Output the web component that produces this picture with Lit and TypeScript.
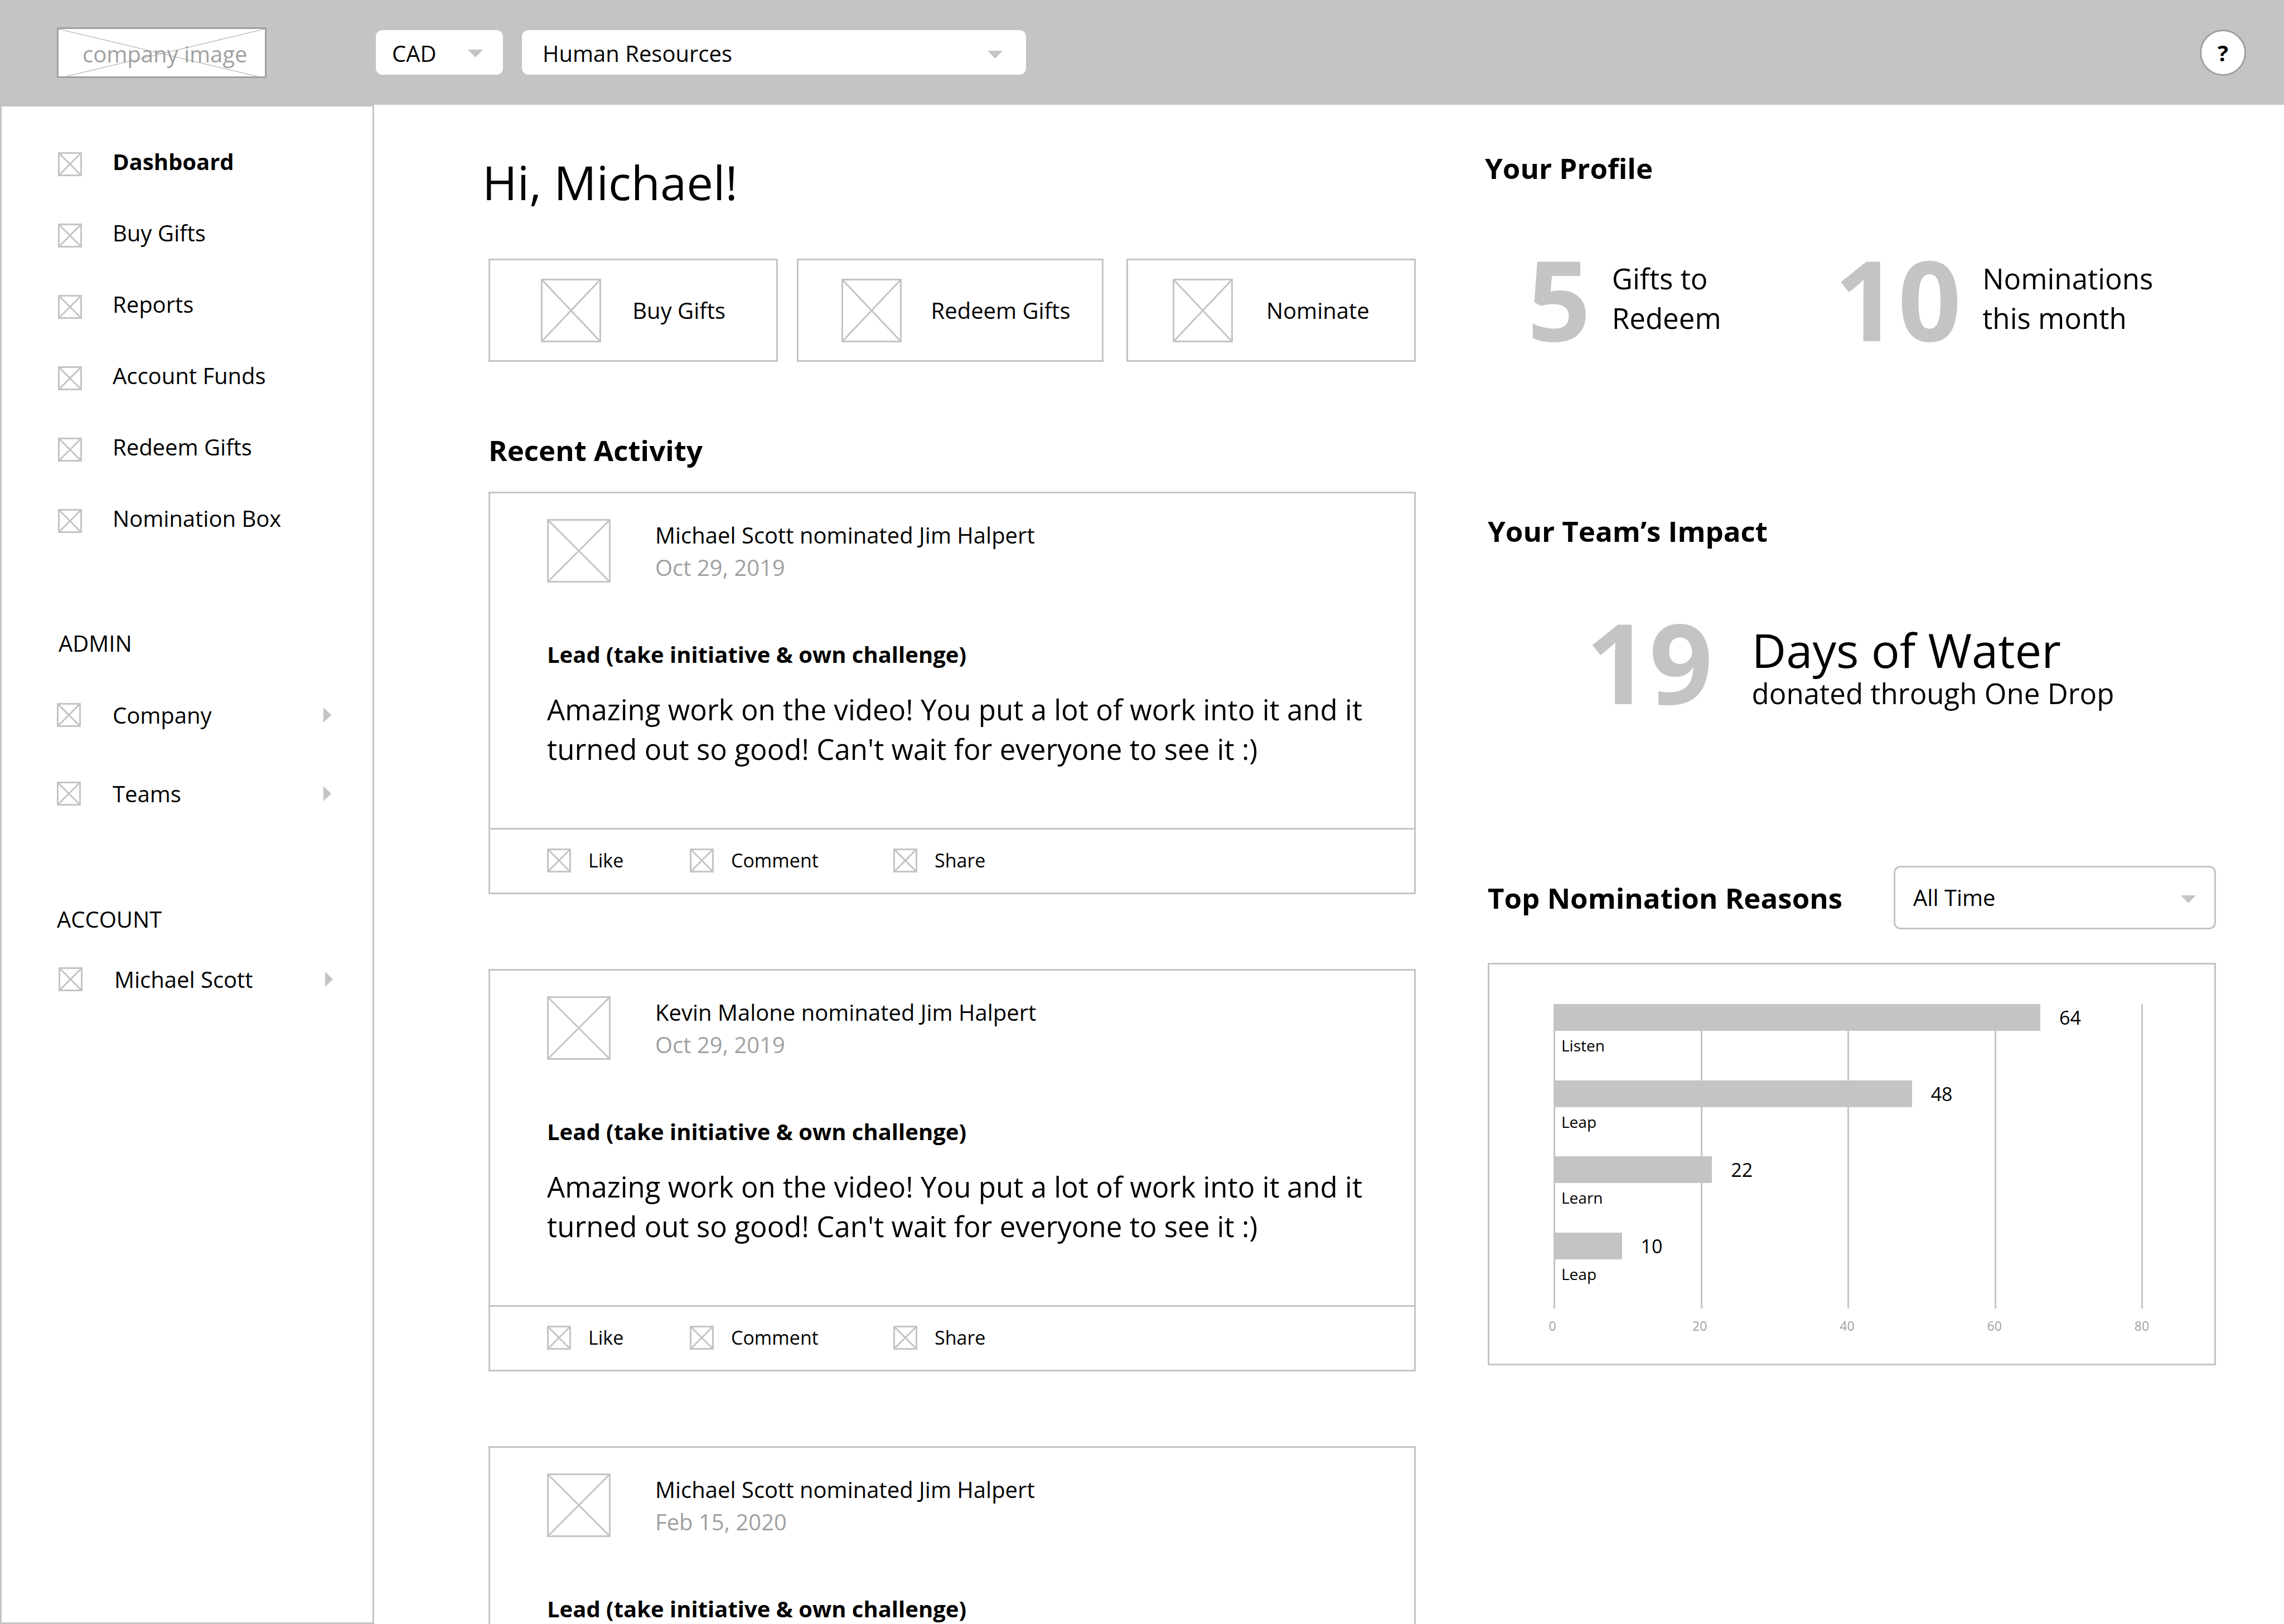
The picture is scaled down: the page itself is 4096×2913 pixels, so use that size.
import { LitElement, html, css, svg } from "lit";
import { customElement, property } from "lit/decorators.js";
import { classMap } from "lit/directives/class-map.js";
import { styleMap } from "lit/directives/style-map.js";

/** Box crossed by its two diagonals, standing in for a picture. */
const placeholder = (w: number, h: number) => html`
  <svg class="ph" width=${w} height=${h} viewBox="0 0 ${w} ${h}" aria-hidden="true">
    ${svg`<path d="M1.5 1.5H${w - 1.5}V${h - 1.5}H1.5ZM1.5 1.5L${w - 1.5} ${h - 1.5}M${w - 1.5} 1.5L1.5 ${h - 1.5}"
      fill="none" stroke="#c4c4c4" stroke-width="3" />`}
  </svg>
`;

const caretDown = html`
  <svg class="caret" width="27" height="14" viewBox="0 0 27 14" aria-hidden="true">
    <path d="M0 0H27L13.5 14Z" fill="#c4c4c4" />
  </svg>
`;

const caretRight = html`
  <svg class="caret" width="14" height="27" viewBox="0 0 14 27" aria-hidden="true">
    <path d="M0 0L14 13.5L0 27Z" fill="#c4c4c4" />
  </svg>
`;

const base = css`
  * {
    box-sizing: border-box;
    margin: 0;
    padding: 0;
  }
  svg {
    display: block;
    flex: none;
  }
  a {
    color: inherit;
    text-decoration: none;
  }
  ul {
    list-style: none;
  }
  button,
  select {
    font: inherit;
    color: inherit;
    background: none;
    border: 0;
    cursor: pointer;
  }
`;

@customElement("select-box")
class SelectBox extends LitElement {
  @property() label = "";
  @property({ type: Array }) options: string[] = [];
  @property({ type: Boolean }) outlined = false;
  @property({ type: Boolean }) compact = false;

  static styles = [
    base,
    css`
      :host {
        display: block;
      }
      .box {
        position: relative;
        height: 100%;
      }
      .select {
        display: block;
        appearance: none;
        width: 100%;
        height: 100%;
        padding: 3px 72px 0 37px;
        border-radius: 12px;
        background: #fff;
      }
      .compact .select {
        padding-left: 29px;
        padding-right: 64px;
      }
      .outlined .select {
        border: 3px solid #c4c4c4;
        padding: 0 72px 0 32px;
      }
      .caret {
        position: absolute;
        right: 42px;
        top: 50%;
        margin-top: -3px;
        pointer-events: none;
      }
      .compact .caret {
        right: 36px;
        margin-top: -5px;
      }
      .outlined .caret {
        right: 36px;
        margin-top: -4px;
      }
    `,
  ];

  render() {
    return html`
      <div class=${classMap({ box: true, outlined: this.outlined, compact: this.compact })}>
        <select class="select" aria-label=${this.label}>
          ${this.options.map((o) => html`<option>${o}</option>`)}
        </select>
        ${caretDown}
      </div>
    `;
  }
}

@customElement("top-bar")
class TopBar extends LitElement {
  static styles = [
    base,
    css`
      :host {
        display: block;
      }
      .bar {
        display: flex;
        align-items: center;
        height: 188px;
        padding: 0 68px 0 102px;
        background: #c4c4c4;
      }
      .brand {
        width: 572px;
      }
      .logo {
        position: relative;
        display: flex;
        align-items: center;
        width: 376px;
        height: 91px;
        padding: 5px 0 0 43px;
        border: 3px solid #a0a0a0;
        background: #fff;
        color: #a0a0a0;
        white-space: nowrap;
      }
      .cross {
        position: absolute;
        inset: 0;
      }
      .currency {
        width: 228px;
        height: 80px;
        margin-right: 34px;
      }
      .department {
        width: 904px;
        height: 80px;
      }
      .help {
        width: 83px;
        height: 83px;
        margin-left: auto;
        padding-top: 2px;
        border: 3px solid #a0a0a0;
        border-radius: 50%;
        background: #fff;
        font-weight: 700;
        line-height: 54px;
      }
    `,
  ];

  render() {
    return html`
      <header class="bar">
        <div class="brand">
          <a class="logo" href="#">
            company image
            <svg class="cross" width="370" height="85" viewBox="0 0 370 85" aria-hidden="true">
              <path d="M0 0L356 85M370 0L14 85" fill="none" stroke="#a0a0a0" stroke-width="1" />
            </svg>
          </a>
        </div>
        <select-box class="currency" label="Currency" compact .options=${["CAD"]}></select-box>
        <select-box class="department" label="Department" .options=${["Human Resources"]}></select-box>
        <button class="help" aria-label="Help">?</button>
      </header>
    `;
  }
}

const mainLinks = ["Dashboard", "Buy Gifts", "Reports", "Account Funds", "Redeem Gifts", "Nomination Box"];

@customElement("side-nav")
class SideNav extends LitElement {
  static styles = [
    base,
    css`
      :host {
        display: block;
      }
      .nav {
        height: 100%;
        padding-top: 82px;
        border: 3px solid #c4c4c4;
      }
      .links {
        padding-left: 101px;
      }
      .link {
        display: flex;
        align-items: flex-start;
        gap: 55px;
        height: 128px;
        line-height: 34px;
      }
      .current {
        font-weight: 700;
      }
      .group {
        padding: 86px 74px 0 99px;
      }
      .account {
        padding: 128px 71px 0 99px;
      }
      .heading {
        font-size: 40px;
        font-weight: 400;
        line-height: 54px;
        margin-bottom: 31px;
        padding-left: 3px;
      }
      .account .heading {
        margin-bottom: 10px;
        padding-left: 0;
      }
      .row {
        display: flex;
        align-items: center;
        gap: 57px;
        width: 100%;
        height: 141px;
      }
      .account .row {
        padding-left: 3px;
      }
      .row .caret {
        margin-left: auto;
      }
    `,
  ];

  private row(label: string) {
    return html`
      <li>
        <button class="row">${placeholder(43, 43)}<span>${label}</span>${caretRight}</button>
      </li>
    `;
  }

  render() {
    return html`
      <nav class="nav">
        <ul class="links">
          ${mainLinks.map(
            (l, i) => html`
              <li>
                <a class=${classMap({ link: true, current: i === 0 })} href="#">
                  ${placeholder(43, 43)}<span>${l}</span>
                </a>
              </li>
            `
          )}
        </ul>
        <section class="group">
          <h2 class="heading">ADMIN</h2>
          <ul>
            ${["Company", "Teams"].map((l) => this.row(l))}
          </ul>
        </section>
        <section class="group account">
          <h2 class="heading">ACCOUNT</h2>
          <ul>
            ${this.row("Michael Scott")}
          </ul>
        </section>
      </nav>
    `;
  }
}

interface Post {
  title: string;
  date: string;
  value: string;
  message: string;
}

@customElement("activity-card")
class ActivityCard extends LitElement {
  @property({ type: Object }) post!: Post;

  static styles = [
    base,
    css`
      :host {
        display: block;
      }
      .card {
        border: 3px solid #c4c4c4;
      }
      .content {
        padding: 46px 60px 106px 102px;
      }
      .head {
        display: flex;
        gap: 80px;
        margin-bottom: 100px;
        line-height: 58px;
      }
      .date {
        color: #a0a0a0;
      }
      .value {
        font-size: 40px;
        font-weight: 700;
        line-height: 54px;
        margin-bottom: 36px;
      }
      .message {
        font-size: 51px;
        line-height: 71px;
      }
      .actions {
        display: grid;
        grid-template-columns: 256px 365px auto;
        justify-content: start;
        padding: 34px 0 36px 102px;
        border-top: 3px solid #c4c4c4;
        font-size: 34px;
        line-height: 43px;
      }
      .action {
        display: flex;
        align-items: center;
        gap: 31px;
        justify-self: start;
      }
    `,
  ];

  render() {
    const { title, date, value, message } = this.post;
    return html`
      <article class="card">
        <div class="content">
          <div class="head">
            ${placeholder(114, 114)}
            <div>
              <p>${title}</p>
              <p class="date">${date}</p>
            </div>
          </div>
          <h3 class="value">${value}</h3>
          <p class="message">${message}</p>
        </div>
        <div class="actions">
          ${["Like", "Comment", "Share"].map(
            (a) => html`<button class="action">${placeholder(43, 43)}<span>${a}</span></button>`
          )}
        </div>
      </article>
    `;
  }
}

const ticks = [0, 20, 40, 60, 80];

/** Each bar's extent is a share of the plot's full width. */
const reasons = [
  { name: "Listen", votes: 64, extent: 82.6 },
  { name: "Leap", votes: 48, extent: 60.8 },
  { name: "Learn", votes: 22, extent: 26.9 },
  { name: "Leap", votes: 10, extent: 11.6 },
];

@customElement("reason-chart")
class ReasonChart extends LitElement {
  static styles = [
    base,
    css`
      :host {
        display: block;
      }
      .chart {
        padding: 71px 128px 52px 115px;
        border: 3px solid #c4c4c4;
      }
      .plot {
        position: relative;
      }
      .grid {
        position: absolute;
        inset: 0;
        display: flex;
        justify-content: space-between;
      }
      .line {
        width: 3px;
        background: #c4c4c4;
      }
      .bars {
        position: relative;
        display: grid;
        grid-auto-rows: 1fr;
        height: 546px;
      }
      .track {
        display: flex;
        align-items: center;
        gap: 34px;
        height: 48px;
      }
      .bar {
        height: 48px;
        background: #c4c4c4;
      }
      .votes {
        font-size: 34px;
      }
      .name {
        padding-left: 14px;
        font-size: 28px;
        line-height: 52px;
      }
      .axis {
        display: flex;
        justify-content: space-between;
        margin: 15px -18px 0 -22px;
        color: #a0a0a0;
        font-size: 23px;
        line-height: 32px;
      }
      .tick {
        width: 40px;
        text-align: center;
      }
    `,
  ];

  render() {
    return html`
      <div class="chart">
        <div class="plot">
          <div class="grid">${ticks.map(() => html`<span class="line"></span>`)}</div>
          <ul class="bars">
            ${reasons.map(
              (r) => html`
                <li>
                  <div class="track">
                    <span class="bar" style=${styleMap({ width: `${r.extent}%` })}></span>
                    <span class="votes">${r.votes}</span>
                  </div>
                  <p class="name">${r.name}</p>
                </li>
              `
            )}
          </ul>
        </div>
        <div class="axis">${ticks.map((t) => html`<span class="tick">${t}</span>`)}</div>
      </div>
    `;
  }
}

const message =
  "Amazing work on the video! You put a lot of work into it and it turned out so good! Can't wait for everyone to see it :)";
const value = "Lead (take initiative & own challenge)";

const posts: Post[] = [
  { title: "Michael Scott nominated Jim Halpert", date: "Oct 29, 2019", value, message },
  { title: "Kevin Malone nominated Jim Halpert", date: "Oct 29, 2019", value, message },
  { title: "Michael Scott nominated Jim Halpert", date: "Feb 15, 2020", value, message },
];

@customElement("app-root")
class AppRoot extends LitElement {
  static styles = [
    base,
    css`
      :host {
        display: flex;
        flex-direction: column;
        height: 100vh;
        overflow: hidden;
        background: #fff;
        color: #000;
        font-family: "Open Sans", "Noto Sans", sans-serif;
        font-size: 40px;
        line-height: 54px;
      }
      .body {
        flex: 1;
        min-height: 0;
        display: grid;
        grid-template-columns: 671px minmax(0, 1fr);
        grid-template-rows: minmax(0, 1fr);
      }
      .main {
        min-height: 0;
        overflow-y: auto;
        scrollbar-width: none;
        display: grid;
        grid-template-columns: minmax(0, 1674fr) minmax(0, 1311fr);
        align-items: start;
        gap: 124px;
        padding: 0 122px 0 194px;
      }
      .feed {
        padding-top: 80px;
      }
      .title {
        font-size: 85px;
        font-weight: 400;
        line-height: 116px;
        margin-bottom: 80px;
      }
      .inset {
        padding-left: 11px;
      }
      .heading {
        font-size: 51px;
        font-weight: 700;
        line-height: 71px;
      }
      .shortcuts {
        display: grid;
        grid-template-columns: 519fr 549fr 526fr;
        column-gap: 34px;
        margin-bottom: 123px;
      }
      .shortcut {
        display: flex;
        align-items: center;
        justify-content: center;
        gap: 56px;
        height: 185px;
        border: 3px solid #c4c4c4;
      }
      .redeem {
        gap: 53px;
        padding-left: 20px;
      }
      .nominate {
        gap: 60px;
        margin-left: 7px;
      }
      .posts {
        display: grid;
        gap: 134px;
        margin-top: 39px;
      }
      .side {
        padding-top: 78px;
      }
      .stats {
        display: flex;
        gap: 203px;
        margin-top: 98px;
        padding-left: 76px;
      }
      .stat {
        display: flex;
        align-items: center;
        gap: 38px;
        font-size: 51px;
        line-height: 71px;
        white-space: nowrap;
      }
      .number {
        color: #c4c4c4;
        font-size: 199px;
        font-weight: 700;
        line-height: 199px;
      }
      .team {
        margin-top: 283px;
        padding-left: 5px;
      }
      .impact {
        display: flex;
        align-items: last baseline;
        gap: 70px;
        margin-top: 98px;
        padding-left: 176px;
        font-size: 51px;
        line-height: 71px;
      }
      .lead {
        font-size: 85px;
        line-height: 85px;
      }
      .reasons {
        margin-top: 268px;
        padding-left: 5px;
      }
      .reasons-head {
        display: flex;
        align-items: center;
        justify-content: space-between;
        margin-bottom: 60px;
      }
      .period {
        width: 578px;
        height: 114px;
      }
    `,
  ];

  render() {
    return html`
      <top-bar></top-bar>
      <div class="body">
        <side-nav></side-nav>
        <main class="main">
          <div class="feed">
            <h1 class="title">Hi, Michael!</h1>
            <div class="inset">
              <div class="shortcuts">
                <a class="shortcut" href="#">${placeholder(108, 114)}<span>Buy Gifts</span></a>
                <a class="shortcut redeem" href="#">${placeholder(108, 114)}<span>Redeem Gifts</span></a>
                <a class="shortcut nominate" href="#">${placeholder(108, 114)}<span>Nominate</span></a>
              </div>
              <h2 class="heading">Recent Activity</h2>
              <div class="posts">
                ${posts.map((p) => html`<activity-card .post=${p}></activity-card>`)}
              </div>
            </div>
          </div>
          <aside class="side">
            <section>
              <h2 class="heading">Your Profile</h2>
              <div class="stats">
                <div class="stat">
                  <span class="number">5</span>
                  <p>Gifts to<br />Redeem</p>
                </div>
                <div class="stat">
                  <span class="number">10</span>
                  <p>Nominations<br />this month</p>
                </div>
              </div>
            </section>
            <section class="team">
              <h2 class="heading">Your Team’s Impact</h2>
              <div class="impact">
                <span class="number">19</span>
                <div>
                  <p class="lead">Days of Water</p>
                  <p>donated through One Drop</p>
                </div>
              </div>
            </section>
            <section class="reasons">
              <div class="reasons-head">
                <h2 class="heading">Top Nomination Reasons</h2>
                <select-box class="period" label="Period" outlined .options=${["All Time"]}></select-box>
              </div>
              <reason-chart></reason-chart>
            </section>
          </aside>
        </main>
      </div>
    `;
  }
}
